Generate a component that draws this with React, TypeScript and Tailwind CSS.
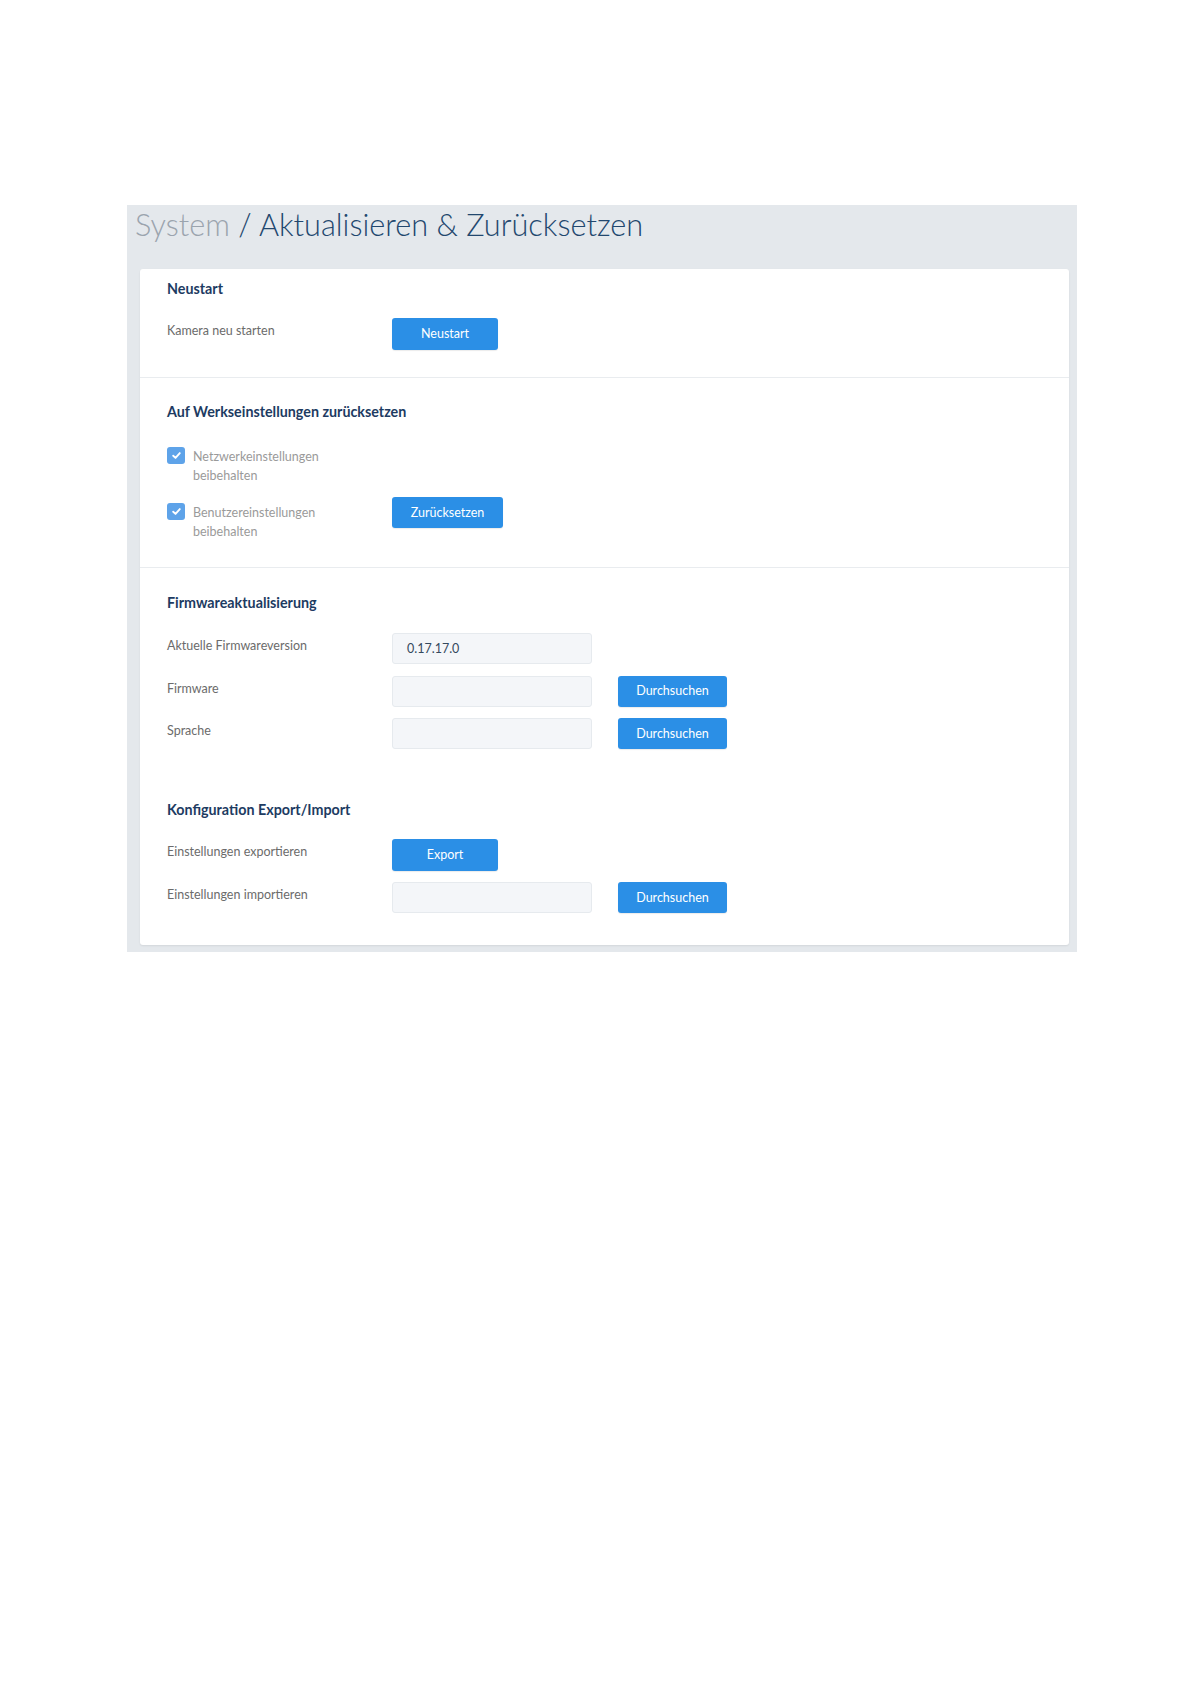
import React from "react";

function Btn({ children, w, h = "h-[32px]" }: { children: React.ReactNode; w: string; h?: string }) {
  return (
    <button
      className={`${w} ${h} rounded-[3px] bg-[#2b8fe6] text-white text-[12.5px] leading-none flex items-center justify-center pt-[1px] shadow-[0_1px_1px_rgba(0,0,0,0.08)]`}
    >
      {children}
    </button>
  );
}

function Field({ value }: { value?: string }) {
  return (
    <div className="w-[200px] h-[31px] rounded-[3px] bg-[#f4f6f9] border border-[#e6eaee] flex items-center pl-[14px] pt-[1px] text-[12.5px] text-[#34495e]">
      {value}
    </div>
  );
}

function Heading({ children }: { children: React.ReactNode }) {
  return <div className="text-[14.3px] leading-[20px] font-bold text-[#1d3b62]">{children}</div>;
}

function Label({ children }: { children: React.ReactNode }) {
  return <div className="w-[225px] shrink-0 mt-[3px] text-[12.5px] leading-[20px] text-[#6b6b6b]">{children}</div>;
}

function Check({ children }: { children: React.ReactNode }) {
  return (
    <div className="flex items-start gap-[8px]">
      <div className="w-[18px] h-[17px] rounded-[3px] bg-[#5ea3e9] flex items-center justify-center shrink-0">
        <svg width="11" height="11" viewBox="0 0 10 10" fill="none">
          <path d="M2 5.2 L4.1 7.2 L8 2.8" stroke="white" strokeWidth="1.7" strokeLinecap="round" strokeLinejoin="round" />
        </svg>
      </div>
      <div className="w-[150px] text-[12.5px] leading-[19px] text-[#9a9a9a]">{children}</div>
    </div>
  );
}

export default function App() {
  return (
    <div className="min-h-screen bg-white font-[family-name:Lato,sans-serif]">
      <div className="pt-[205px] pl-[127px]">
        <div className="w-[950px] bg-[#e4e8ec] pb-[7px]">
          <div className="pl-[8px] pt-[2px] text-[30.7px] leading-[36px] font-light mb-[26px]">
            <span className="text-[#9ba4ae]">System</span>
            <span className="text-[#22476e]"> / Aktualisieren &amp; Zurücksetzen</span>
          </div>
          <div className="ml-[13px] mr-[8px] bg-white rounded-[3px] shadow-[0_1px_2px_rgba(0,0,0,0.08)]">
            {/* Neustart */}
            <div className="px-[27px] pt-[10px] pb-[27px] border-b border-[#e9ecef]">
              <Heading>Neustart</Heading>
              <div className="flex items-start mt-[19px]">
                <Label>Kamera neu starten</Label>
                <Btn w="w-[106px]">Neustart</Btn>
              </div>
            </div>
            {/* Werkseinstellungen */}
            <div className="px-[27px] pt-[24px] pb-[26px] border-b border-[#e9ecef]">
              <Heading>Auf Werkseinstellungen zurücksetzen</Heading>
              <div className="mt-[25px]">
                <Check>Netzwerkeinstellungen beibehalten</Check>
              </div>
              <div className="flex items-start mt-[12px]">
                <div className="w-[225px] shrink-0 mt-[6px]">
                  <Check>Benutzereinstellungen beibehalten</Check>
                </div>
                <Btn w="w-[111px]" h="h-[31px]">Zurücksetzen</Btn>
              </div>
            </div>
            {/* Firmware */}
            <div className="px-[27px] pt-[25px]">
              <Heading>Firmwareaktualisierung</Heading>
              <div className="mt-[20px] flex flex-col gap-[11.5px]">
                <div className="flex items-start">
                  <Label>Aktuelle Firmwareversion</Label>
                  <Field value="0.17.17.0" />
                </div>
                <div className="flex items-start">
                  <Label>Firmware</Label>
                  <Field />
                  <div className="ml-[26px]">
                    <Btn w="w-[109px]" h="h-[31px]">Durchsuchen</Btn>
                  </div>
                </div>
                <div className="flex items-start">
                  <Label>Sprache</Label>
                  <Field />
                  <div className="ml-[26px]">
                    <Btn w="w-[109px]" h="h-[31px]">Durchsuchen</Btn>
                  </div>
                </div>
              </div>
            </div>
            {/* Export/Import */}
            <div className="px-[27px] pt-[51px] pb-[32px]">
              <Heading>Konfiguration Export/Import</Heading>
              <div className="mt-[19px] flex flex-col gap-[11px]">
                <div className="flex items-start">
                  <Label>Einstellungen exportieren</Label>
                  <Btn w="w-[106px]">Export</Btn>
                </div>
                <div className="flex items-start">
                  <Label>Einstellungen importieren</Label>
                  <Field />
                  <div className="ml-[26px]">
                    <Btn w="w-[109px]" h="h-[31px]">Durchsuchen</Btn>
                  </div>
                </div>
              </div>
            </div>
          </div>
        </div>
      </div>
    </div>
  );
}
